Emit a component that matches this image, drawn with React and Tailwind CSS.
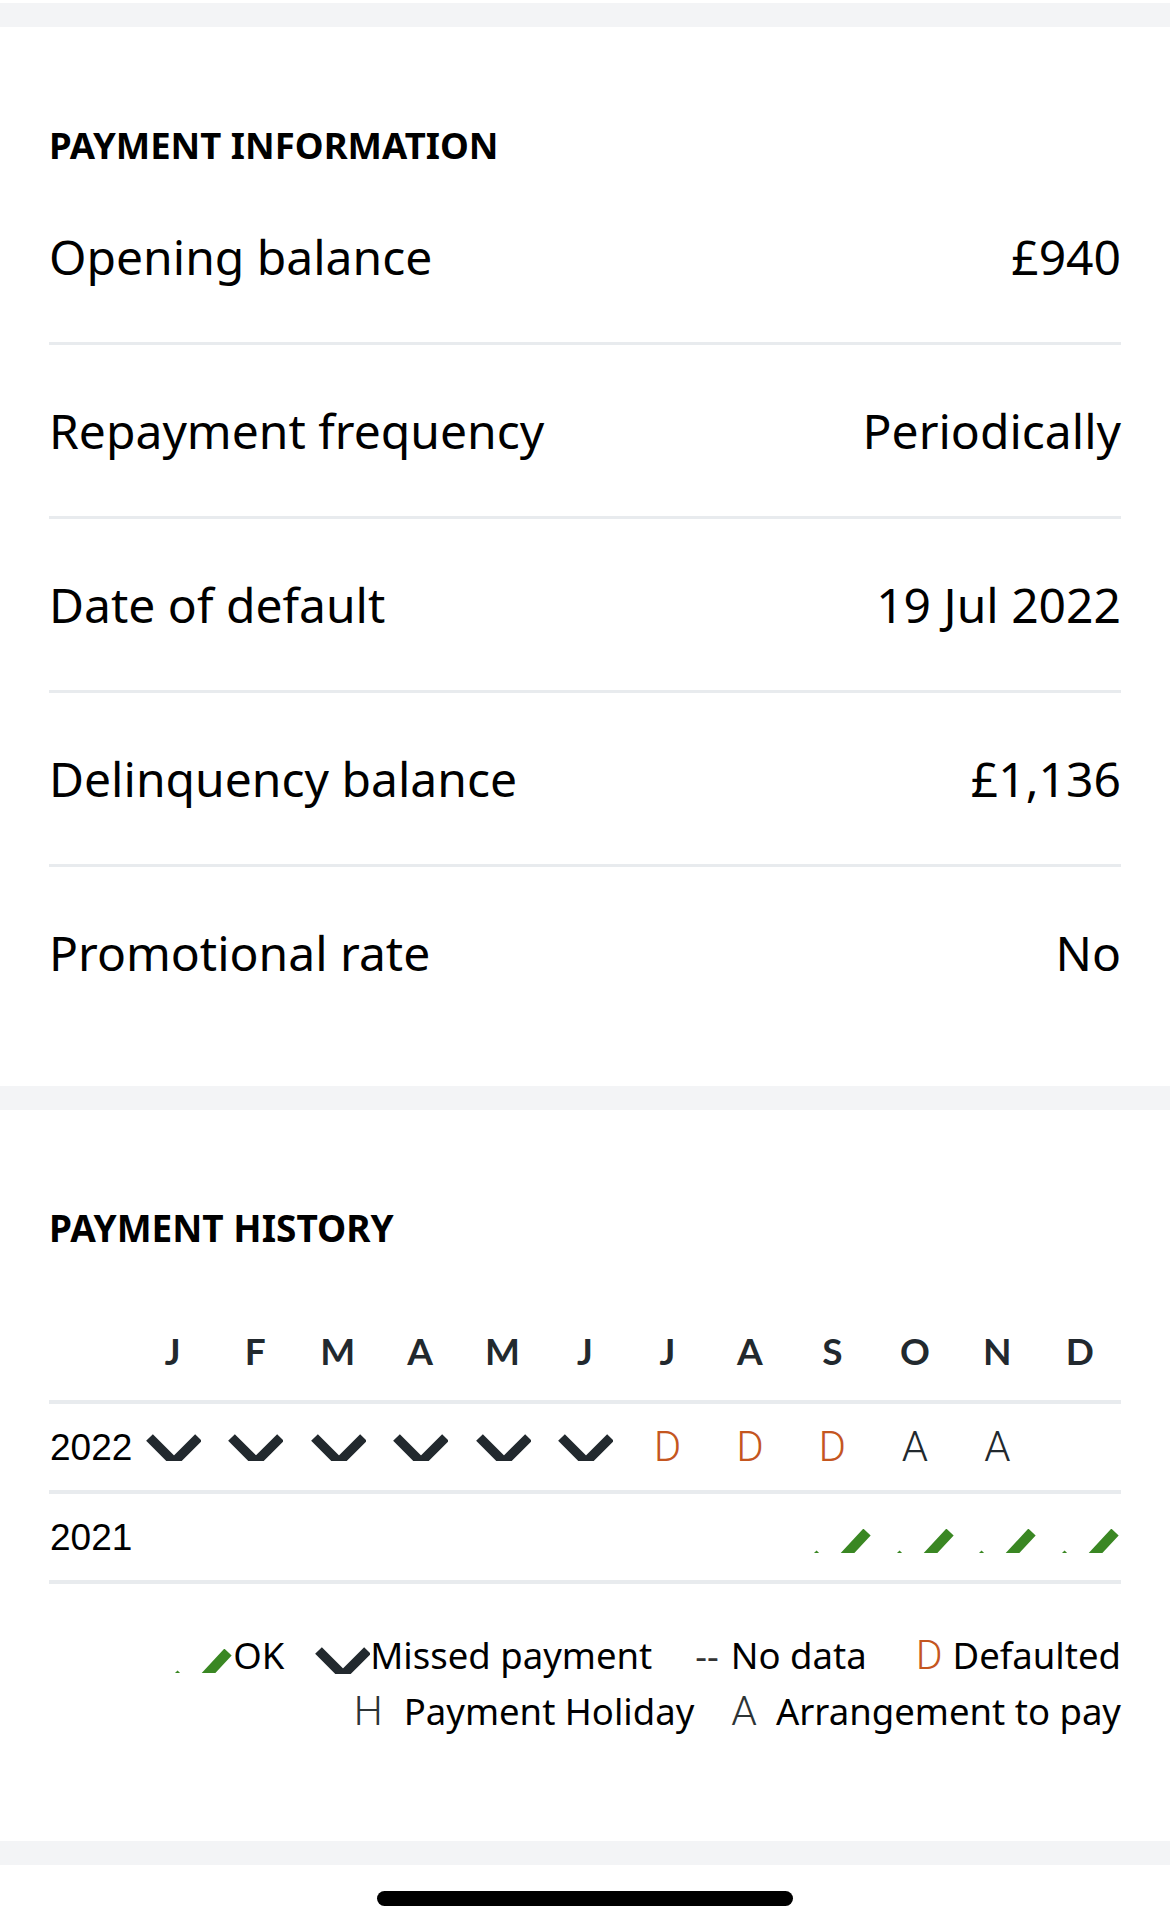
import React from "react";

const MONTHS = ["J", "F", "M", "A", "M", "J", "J", "A", "S", "O", "N", "D"];

function Chevron({ className = "" }) {
  return (
    <svg width="56" height="27" viewBox="0 0 56 27" className={"block shrink-0 " + className}>
      <polyline
        points="4.5,3.5 29,28 53.5,3.5"
        fill="none"
        stroke="#22292e"
        strokeWidth="9.5"
        strokeLinejoin="miter"
        strokeLinecap="butt"
      />
    </svg>
  );
}

function Check({ className = "" }) {
  return (
    <svg width="80" height="24" viewBox="0 0 80 24" className={"block shrink-0 " + className}>
      <polyline
        points="21,25 38.4,42.5 75,3"
        fill="none"
        stroke="#3a8723"
        strokeWidth="10"
        strokeLinejoin="miter"
        strokeLinecap="butt"
      />
    </svg>
  );
}

const INFO = [
  ["Opening balance", "£940"],
  ["Repayment frequency", "Periodically"],
  ["Date of default", "19 Jul 2022"],
  ["Delinquency balance", "£1,136"],
  ["Promotional rate", "No"],
];

const ROW2022 = ["x", "x", "x", "x", "x", "x", "D", "D", "D", "A", "A", ""];
const ROW2021 = ["", "", "", "", "", "", "", "", "ok", "ok", "ok", "ok"];

function Cell({ v }) {
  if (v === "x") return <Chevron />;
  if (v === "ok") return <Check className="mt-[8px]" />;
  if (v === "D")
    return (
      <span className="[font-family:Roboto,sans-serif] font-light text-[42px] leading-none text-[#c4561f]">
        D
      </span>
    );
  if (v === "A")
    return (
      <span className="[font-family:Roboto,sans-serif] font-light text-[42px] leading-none text-[#22292e]">
        A
      </span>
    );
  return null;
}

export default function App() {
  return (
    <div className="w-[1170px] h-[1930px] bg-white [font-family:'Noto_Sans',sans-serif] text-black overflow-hidden">
      <div className="h-[3px] bg-white" />
      <div className="h-[24px] bg-[#f3f4f6]" />

      <section className="px-[49px] pt-[100px] pb-[48px]">
        <h2 className="text-[36.5px] leading-[37px] font-bold mb-[7px]">PAYMENT INFORMATION</h2>
        {INFO.map(([k, v], i) => (
          <div
            key={k}
            className={
              "flex items-center justify-between text-[48px] " +
              (i < INFO.length - 1 ? "h-[174px] border-b-[3px] border-[#e8ebee]" : "h-[171px]")
            }
          >
            <span>{k}</span>
            <span>{v}</span>
          </div>
        ))}
      </section>

      <div className="h-[24px] bg-[#f3f4f6]" />

      <section className="px-[49px] pt-[99px] pb-[102px]">
        <h2 className="text-[37px] leading-[37px] font-bold">PAYMENT HISTORY</h2>

        <div className="mt-[64px] grid grid-cols-13 h-[90px] pb-[10px] items-center">
          <div />
          {MONTHS.map((m, i) => (
            <div
              key={i}
              className="flex justify-center [font-family:Lato,sans-serif] font-bold text-[37px] leading-none text-[#22292e]"
            >
              {m}
            </div>
          ))}
        </div>

        <div className="grid grid-cols-13 h-[90px] border-t-[4px] border-[#e8ebee] items-center">
          <div className="[font-family:'Liberation_Sans',sans-serif] text-[37px] leading-none pl-[1px]">2022</div>
          {ROW2022.map((v, i) => (
            <div key={i} className="flex justify-center items-center">
              <Cell v={v} />
            </div>
          ))}
        </div>

        <div className="grid grid-cols-13 h-[94px] border-y-[4px] border-[#e8ebee] items-center">
          <div className="[font-family:'Liberation_Sans',sans-serif] text-[37px] leading-none pl-[1px]">2021</div>
          {ROW2021.map((v, i) => (
            <div key={i} className="flex justify-center items-center">
              <Cell v={v} />
            </div>
          ))}
        </div>

        <div className="mt-[43px] text-[36.5px] leading-[56px]">
          <div className="flex justify-end items-center h-[56px]">
            <Check className="mt-[12px]" />
            <span className="ml-[0px]">OK</span>
            <Chevron className="ml-[30px] mt-[10px]" />
            <span>Missed payment</span>
            <span className="ml-[43px] text-[#333]">--</span>
            <span className="ml-[12px]">No data</span>
            <span className="ml-[49px] [font-family:Roboto,sans-serif] font-light text-[41px] text-[#c4561f]">D</span>
            <span className="ml-[10px]">Defaulted</span>
          </div>
          <div className="flex justify-end items-center h-[56px]">
            <span className="[font-family:Roboto,sans-serif] font-light text-[41px] text-[#2d3436]">H</span>
            <span className="ml-[21px]">Payment Holiday</span>
            <span className="ml-[37px] [font-family:Roboto,sans-serif] font-light text-[41px] text-[#2d3436]">A</span>
            <span className="ml-[19px]">Arrangement to pay</span>
          </div>
        </div>
      </section>

      <div className="h-[24px] bg-[#f3f4f6]" />
      <div className="pt-[26px]">
        <div className="mx-auto h-[15px] w-[416px] rounded-full bg-black" />
      </div>
    </div>
  );
}
